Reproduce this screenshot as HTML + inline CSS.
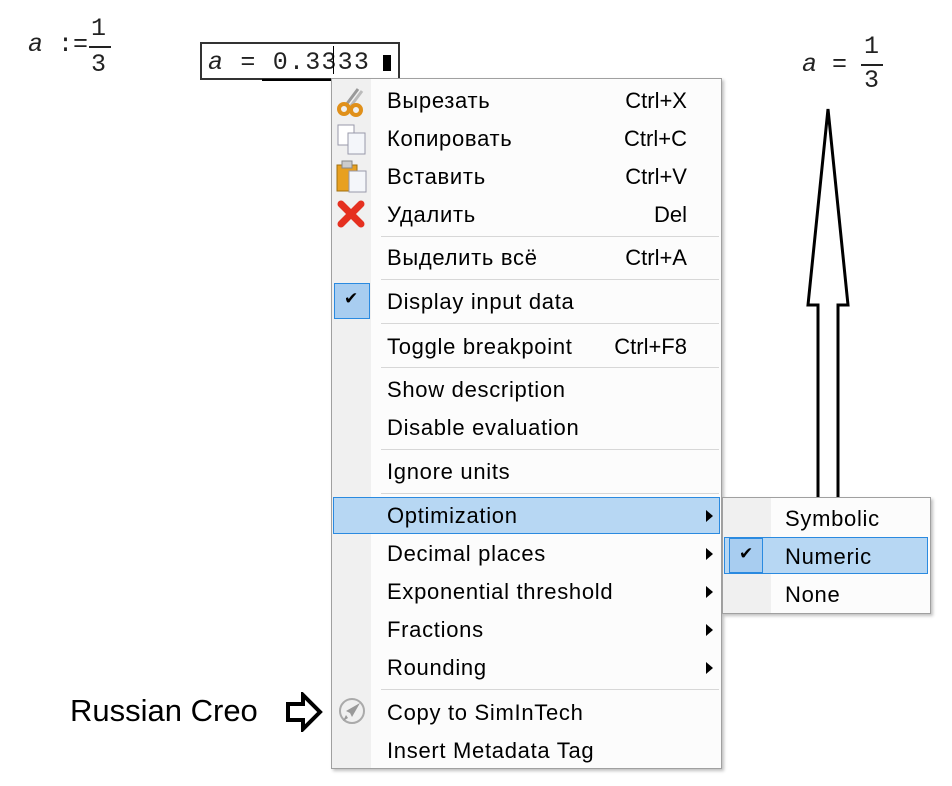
<!DOCTYPE html>
<html><head><meta charset="utf-8"><style>
body{margin:0;width:952px;height:786px;background:#fff;position:relative;overflow:hidden;font-family:"Liberation Sans","DejaVu Sans",sans-serif;}
.abs{position:absolute}
.mono{font-family:"Liberation Mono",monospace;font-size:25px;color:#222}
.menu{position:absolute;left:331px;top:78px;width:389px;height:689px;background:#f2f2f2;border:1px solid #a0a0a0;box-shadow:2px 2px 3px rgba(0,0,0,.25)}
.gut{position:absolute;left:0;top:0;width:39px;height:100%;background:#f0f0f0}
.body{position:absolute;left:39px;top:0;right:0;height:100%;background:#fcfcfc}
.it{position:absolute;left:55px;font-size:22px;letter-spacing:0.7px;color:#000;line-height:24px;white-space:nowrap}
.sc{position:absolute;right:34px;font-size:22px;line-height:24px}
.sep{position:absolute;left:49px;right:2px;height:1px;background:#d7d7d7}
.tri{position:absolute;right:8px;width:0;height:0;border-top:6px solid transparent;border-bottom:6px solid transparent;border-left:7px solid #000}
.hl{position:absolute;background:#b7d7f3;border:1px solid #2a8ae0}
.chk{position:absolute;background:#a8cdf0;border:1px solid #2a8ae0;width:34px;height:34px}
</style></head><body>
<div class="abs mono" style="left:28px;top:30px"><i>a</i> :=</div>
<div class="abs mono" style="left:91px;top:14px">1</div>
<div class="abs" style="left:89px;top:46px;width:22px;height:2px;background:#222"></div>
<div class="abs mono" style="left:91px;top:50px">3</div>

<div class="abs" style="left:200px;top:42px;width:200px;height:38px;border:2px solid #333;box-sizing:border-box"></div>
<div class="abs mono" style="left:208px;top:48px;letter-spacing:1.2px"><i>a</i> = 0.3333</div>
<div class="abs" style="left:262px;top:79px;width:70px;height:2px;background:#000"></div>
<div class="abs" style="left:333px;top:46px;width:1px;height:28px;background:#000"></div>
<div class="abs" style="left:383px;top:55px;width:8px;height:16px;background:#000"></div>

<div class="abs mono" style="left:802px;top:50px"><i>a</i> =</div>
<div class="abs mono" style="left:864px;top:32px">1</div>
<div class="abs" style="left:861px;top:64px;width:22px;height:2px;background:#222"></div>
<div class="abs mono" style="left:864px;top:66px">3</div>

<svg class="abs" style="left:800px;top:105px" width="60" height="400"><path d="M28 4 L48 200 L38 200 L38 395 L18 395 L18 200 L8 200 Z" fill="#fff" stroke="#000" stroke-width="3"/></svg>

<div class="abs" style="left:70px;top:693px;font-size:31px;color:#000">Russian Creo</div>
<svg class="abs" style="left:285px;top:692px" width="40" height="40"><path d="M3 12 H18 V3 L35 20 L18 37 V28 H3 Z" fill="#fff" stroke="#000" stroke-width="4"/></svg>

<div class="menu"><div class="gut"></div><div class="body"></div>
<svg class="abs" style="left:4px;top:8px" width="30" height="30"><line x1="22" y1="2" x2="10" y2="18" stroke="#999" stroke-width="3"/><line x1="26" y1="4" x2="14" y2="20" stroke="#bbb" stroke-width="3"/><circle cx="8" cy="22" r="5" fill="none" stroke="#e0901a" stroke-width="4"/><circle cx="20" cy="23" r="5" fill="none" stroke="#e0901a" stroke-width="4"/></svg>
<svg class="abs" style="left:4px;top:44px" width="32" height="32"><rect x="2" y="2" width="16" height="20" fill="#fff" stroke="#99a"/><rect x="12" y="10" width="17" height="21" fill="#f4f6fa" stroke="#99a"/></svg>
<svg class="abs" style="left:4px;top:80px" width="32" height="34"><rect x="1" y="6" width="20" height="26" fill="#e8a020" stroke="#a07010"/><rect x="6" y="2" width="10" height="7" fill="#ccc" stroke="#888"/><rect x="13" y="12" width="17" height="21" fill="#f4f6fa" stroke="#99a"/></svg>
<svg class="abs" style="left:4px;top:120px" width="32" height="30"><path d="M5 5 L25 25 M25 5 L5 25" stroke="#e53020" stroke-width="7" stroke-linecap="round"/></svg>
<div class="chk" style="left:2px;top:204px"></div><div class="abs" style="left:12px;top:210px;font-size:17px">✔</div>
<svg class="abs" style="left:6px;top:618px" width="30" height="30"><circle cx="14" cy="14" r="12" fill="none" stroke="#aaa" stroke-width="2"/><path d="M22 6 L12 16 L8 14 Z M22 6 L14 20 L12 16 Z M8 18 L5 24 L10 21" fill="#999"/></svg>

<div class="it" style="top:10px">Вырезать</div><div class="sc" style="top:10px">Ctrl+X</div>
<div class="it" style="top:48px">Копировать</div><div class="sc" style="top:48px">Ctrl+C</div>
<div class="it" style="top:86px">Вставить</div><div class="sc" style="top:86px">Ctrl+V</div>
<div class="it" style="top:124px">Удалить</div><div class="sc" style="top:124px">Del</div>
<div class="sep" style="top:157px"></div>
<div class="it" style="top:167px">Выделить всё</div><div class="sc" style="top:167px">Ctrl+A</div>
<div class="sep" style="top:200px"></div>
<div class="it" style="top:211px">Display input data</div>
<div class="sep" style="top:244px"></div>
<div class="it" style="top:256px">Toggle breakpoint</div><div class="sc" style="top:256px">Ctrl+F8</div>
<div class="sep" style="top:288px"></div>
<div class="it" style="top:299px">Show description</div>
<div class="it" style="top:337px">Disable evaluation</div>
<div class="sep" style="top:370px"></div>
<div class="it" style="top:381px">Ignore units</div>
<div class="sep" style="top:414px"></div>
<div class="hl" style="left:1px;top:418px;width:385px;height:35px"></div>
<div class="it" style="top:425px">Optimization</div><div class="tri" style="top:431px"></div>
<div class="it" style="top:463px">Decimal places</div><div class="tri" style="top:469px"></div>
<div class="it" style="top:501px">Exponential threshold</div><div class="tri" style="top:507px"></div>
<div class="it" style="top:539px">Fractions</div><div class="tri" style="top:545px"></div>
<div class="it" style="top:577px">Rounding</div><div class="tri" style="top:583px"></div>
<div class="sep" style="top:610px"></div>
<div class="it" style="top:622px">Copy to SimInTech</div>
<div class="it" style="top:660px">Insert Metadata Tag</div>
</div>

<div class="abs" style="left:722px;top:497px;width:207px;height:115px;background:#fcfcfc;border:1px solid #a0a0a0;box-shadow:2px 2px 3px rgba(0,0,0,.25)">
<div class="abs" style="left:0;top:0;width:48px;height:100%;background:#f0f0f0"></div>
<div class="hl" style="left:1px;top:39px;width:202px;height:35px"></div>
<div class="chk" style="left:6px;top:40px;width:32px;height:33px"></div>
<div class="abs" style="left:16px;top:46px;font-size:17px">✔</div>
<div class="it" style="left:62px;top:9px">Symbolic</div>
<div class="it" style="left:62px;top:47px">Numeric</div>
<div class="it" style="left:62px;top:85px">None</div>
</div>
</body></html>
